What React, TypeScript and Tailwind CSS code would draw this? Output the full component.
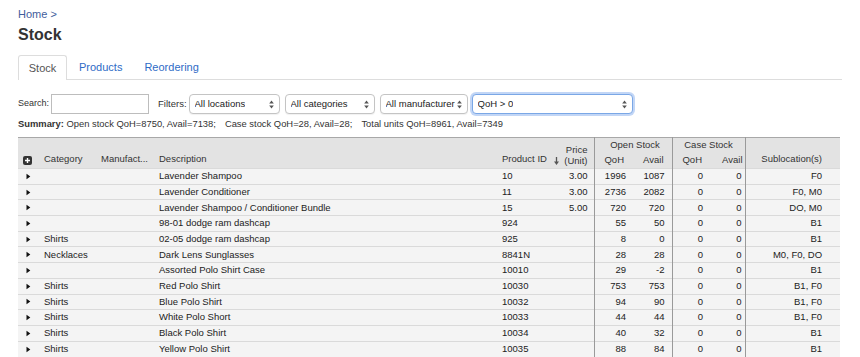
import React from "react";

type Row = {
  cat: string;
  desc: string;
  id: string;
  price: string;
  oq: string;
  oa: string;
  cq: string;
  ca: string;
  sub: string;
};

const rows: Row[] = [
  { cat: "", desc: "Lavender Shampoo", id: "10", price: "3.00", oq: "1996", oa: "1087", cq: "0", ca: "0", sub: "F0" },
  { cat: "", desc: "Lavender Conditioner", id: "11", price: "3.00", oq: "2736", oa: "2082", cq: "0", ca: "0", sub: "F0, M0" },
  { cat: "", desc: "Lavender Shampoo / Conditioner Bundle", id: "15", price: "5.00", oq: "720", oa: "720", cq: "0", ca: "0", sub: "DO, M0" },
  { cat: "", desc: "98-01 dodge ram dashcap", id: "924", price: "", oq: "55", oa: "50", cq: "0", ca: "0", sub: "B1" },
  { cat: "Shirts", desc: "02-05 dodge ram dashcap", id: "925", price: "", oq: "8", oa: "0", cq: "0", ca: "0", sub: "B1" },
  { cat: "Necklaces", desc: "Dark Lens Sunglasses", id: "8841N", price: "", oq: "28", oa: "28", cq: "0", ca: "0", sub: "M0, F0, DO" },
  { cat: "", desc: "Assorted Polo Shirt Case", id: "10010", price: "", oq: "29", oa: "-2", cq: "0", ca: "0", sub: "B1" },
  { cat: "Shirts", desc: "Red Polo Shirt", id: "10030", price: "", oq: "753", oa: "753", cq: "0", ca: "0", sub: "B1, F0" },
  { cat: "Shirts", desc: "Blue Polo Shirt", id: "10032", price: "", oq: "94", oa: "90", cq: "0", ca: "0", sub: "B1, F0" },
  { cat: "Shirts", desc: "White Polo Short", id: "10033", price: "", oq: "44", oa: "44", cq: "0", ca: "0", sub: "B1, F0" },
  { cat: "Shirts", desc: "Black Polo Shirt", id: "10034", price: "", oq: "40", oa: "32", cq: "0", ca: "0", sub: "B1" },
  { cat: "Shirts", desc: "Yellow Polo Shirt", id: "10035", price: "", oq: "88", oa: "84", cq: "0", ca: "0", sub: "B1" },
];

function UpDown() {
  return (
    <svg width="5" height="9" viewBox="0 0 5 9" className="shrink-0">
      <path d="M2.5 0.5 L4.8 3.6 L0.2 3.6 Z" fill="#555" />
      <path d="M2.5 8.5 L4.8 5.4 L0.2 5.4 Z" fill="#555" />
    </svg>
  );
}

function Select({ label, w, focus }: { label: string; w: string; focus?: boolean }) {
  return (
    <div
      className={`${w} h-[20px] flex items-center justify-between pl-[5px] pr-[5px] rounded-[4px] bg-white ${
        focus
          ? "border border-[#7aa7e6] shadow-[0_0_0_2px_rgba(120,165,235,0.45)]"
          : "border border-[#c4c4c4] shadow-[0_1px_1px_rgba(0,0,0,0.06)]"
      }`}
    >
      <span className="whitespace-nowrap overflow-hidden">{label}</span>
      <UpDown />
    </div>
  );
}

function Triangle() {
  return (
    <svg width="5" height="7" viewBox="0 0 5 7">
      <path d="M0.5 0.8 L4.3 3.5 L0.5 6.2 Z" fill="#111" />
    </svg>
  );
}

export default function App() {
  return (
    <div
      className="w-[860px] h-[357px] overflow-hidden bg-white px-[18px] text-[#222]"
      style={{ fontFamily: '"Liberation Sans", Arial, sans-serif' }}
    >
      {/* breadcrumb + title */}
      <div className="pt-[7px] text-[11px] leading-[14px] text-[#3f5d9c]">Home &gt;</div>
      <h1 className="mt-[4px] text-[16px] leading-[20px] font-bold text-[#333]">Stock</h1>

      {/* tabs */}
      <div className="mt-[10px] flex items-end border-b border-[#dddddd] h-[25px] text-[11px]">
        <div className="h-[25px] w-[49px] flex items-center justify-center border border-b-0 border-[#dddddd] rounded-t-[3px] bg-white text-[#555] -mb-px">
          Stock
        </div>
        <div className="h-[24px] flex items-center ml-[12px] text-[#2e6bc6]">Products</div>
        <div className="h-[24px] flex items-center ml-[22px] text-[#2e6bc6]">Reordering</div>
      </div>

      {/* search / filters */}
      <div className="mt-[14px] flex items-center text-[9.5px] text-[#333] h-[20px]">
        <span className="text-[9px]">Search:</span>
        <div className="ml-[2px] w-[98px] h-[20px] border border-[#bdbdbd] bg-white" />
        <span className="ml-[9px]">Filters:</span>
        <div className="ml-[2px] flex text-[#222]">
          <Select label="All locations" w="w-[91px]" />
          <div className="ml-[5px]">
            <Select label="All categories" w="w-[90px]" />
          </div>
          <div className="ml-[5px]">
            <Select label="All manufacturer" w="w-[88px]" />
          </div>
          <div className="ml-[4px]">
            <Select label="QoH > 0" w="w-[161px]" focus />
          </div>
        </div>
      </div>

      {/* summary */}
      <div className="mt-[3px] text-[9.4px] leading-[14px] text-[#333] whitespace-nowrap">
        <b>Summary:</b> Open stock QoH=8750, Avail=7138;
        <span className="ml-[9px]">Case stock QoH=28, Avail=28;</span>
        <span className="ml-[9px]">Total units QoH=8961, Avail=7349</span>
      </div>

      {/* table */}
      <table className="mt-[6px] w-[822px] table-fixed border-collapse text-[9.5px]">
        <colgroup>
          <col className="w-[22px]" />
          <col className="w-[57px]" />
          <col className="w-[58px]" />
          <col className="w-[342px]" />
          <col className="w-[65px]" />
          <col className="w-[32px]" />
          <col className="w-[38px]" />
          <col className="w-[40px]" />
          <col className="w-[36px]" />
          <col className="w-[37px]" />
          <col className="w-[95px]" />
        </colgroup>
        <thead className="bg-[#e3e3e3] text-[#333]">
          <tr className="h-[15px] border-t border-[#a8a8a8]">
            <th rowSpan={2} className="align-bottom pb-[3px] pl-[5px] font-normal">
              <div className="w-[9px] h-[9px] rounded-[2px] bg-[#333] flex items-center justify-center">
                <svg width="7" height="7" viewBox="0 0 7 7">
                  <path d="M3.5 1 V6 M1 3.5 H6" stroke="#fff" strokeWidth="1.4" />
                </svg>
              </div>
            </th>
            <th rowSpan={2} className="align-bottom pb-[2px] pl-[4px] text-left font-normal">Category</th>
            <th rowSpan={2} className="align-bottom pb-[2px] pl-[4px] text-left font-normal whitespace-nowrap">
              Manufact...
            </th>
            <th rowSpan={2} className="align-bottom pb-[2px] pl-[4px] text-left font-normal">Description</th>
            <th rowSpan={2} className="align-bottom pb-[2px] pl-[5px] pr-[3px] text-left font-normal">
              <div className="flex items-end justify-between">
                <span>Product ID</span>
                <svg width="5" height="8" viewBox="0 0 5 8" className="mb-[1px]">
                  <path d="M2.5 0 V5" stroke="#555" strokeWidth="1.3" />
                  <path d="M0 4.5 L5 4.5 L2.5 8 Z" fill="#555" />
                </svg>
              </div>
            </th>
            <th rowSpan={2} className="align-bottom pb-[2px] pr-[6px] text-right font-normal leading-[11px] border-r border-[#9a9a9a]">
              Price
              <br />
              (Unit)
            </th>
            <th colSpan={2} className="font-normal text-center pl-[4px]">Open Stock</th>
            <th colSpan={2} className="font-normal text-center border-l border-[#9a9a9a]">Case Stock</th>
            <th rowSpan={2} className="align-bottom pb-[2px] pr-[18px] text-right font-normal border-l border-[#9a9a9a]">
              Sublocation(s)
            </th>
          </tr>
          <tr className="h-[16px]">
            <th className="font-normal text-center pl-[2px]">QoH</th>
            <th className="font-normal text-right pr-[8px]">Avail</th>
            <th className="font-normal text-center border-l border-[#9a9a9a] pl-[4px]">QoH</th>
            <th className="font-normal text-right pr-[2px]">Avail</th>
          </tr>
        </thead>
        <tbody>
          {rows.map((r, i) => (
            <tr key={i} className="h-[15.7px] bg-[#f4f4f4] border-t border-[#dadada]">
              <td className="pl-[8px]">
                <Triangle />
              </td>
              <td className="pl-[4px] whitespace-nowrap">{r.cat}</td>
              <td className="pl-[4px]"></td>
              <td className="pl-[4px] whitespace-nowrap">{r.desc}</td>
              <td className="pl-[5px]">{r.id}</td>
              <td className="pr-[6px] text-right border-r border-[#9a9a9a]">{r.price}</td>
              <td className="pr-[6px] text-right">{r.oq}</td>
              <td className="pr-[7px] text-right">{r.oa}</td>
              <td className="pr-[5px] text-right border-l border-[#9a9a9a]">{r.cq}</td>
              <td className="pr-[3px] text-right">{r.ca}</td>
              <td className="pr-[18px] text-right border-l border-[#9a9a9a] whitespace-nowrap">{r.sub}</td>
            </tr>
          ))}
        </tbody>
      </table>
    </div>
  );
}
